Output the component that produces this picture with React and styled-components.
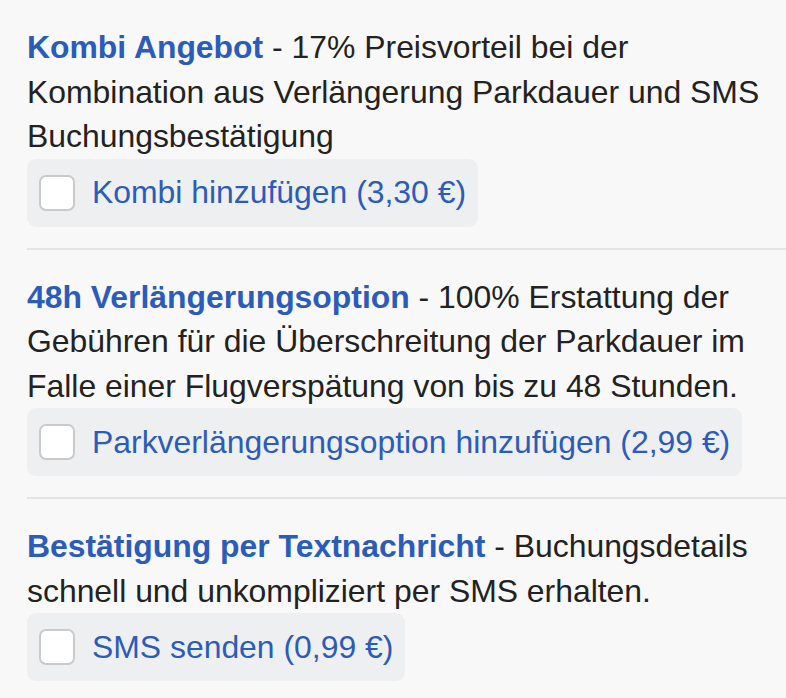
import React from "react";
import styled, { createGlobalStyle } from "styled-components";

const GlobalStyle = createGlobalStyle`
  html, body {
    margin: 0;
    padding: 0;
    background: #f8f8f8;
  }
  body {
    font-family: "Liberation Sans", Arial, Helvetica, sans-serif;
  }
`;

const List = styled.div`
  padding: 25px 0 0 27px;
  width: 786px;
  box-sizing: border-box;
`;

const Option = styled.section`
  padding-bottom: 21px;
  & + & {
    border-top: 2px solid #e4e4e6;
    padding-top: 25px;
  }
`;

const Description = styled.p`
  margin: 0;
  font-size: 31.9px;
  line-height: 44.5px;
  color: #222222;
`;

const Title = styled.strong`
  font-weight: 700;
  color: #2b5cba;
`;

const Choice = styled.label`
  display: inline-flex;
  align-items: center;
  gap: 17px;
  height: 68px;
  padding: 0 12px;
  box-sizing: border-box;
  border-radius: 9px;
  background: #eeeff1;
  cursor: pointer;
`;

const Box = styled.input.attrs({ type: "checkbox" })`
  appearance: none;
  margin: 0;
  width: 36px;
  height: 36px;
  box-sizing: border-box;
  border: 2px solid #cacaca;
  border-radius: 7px;
  background: #ffffff;
  flex: none;
`;

const ChoiceText = styled.span`
  font-size: 31.9px;
  color: #2b5cba;
  white-space: nowrap;
`;

const options = [
  {
    title: "Kombi Angebot",
    text: "17% Preisvorteil bei der Kombination aus Verlängerung Parkdauer und SMS Buchungsbestätigung",
    action: "Kombi hinzufügen (3,30 €)",
  },
  {
    title: "48h Verlängerungsoption",
    text: "100% Erstattung der Gebühren für die Überschreitung der Parkdauer im Falle einer Flugverspätung von bis zu 48 Stunden.",
    action: "Parkverlängerungsoption hinzufügen (2,99 €)",
  },
  {
    title: "Bestätigung per Textnachricht",
    text: "Buchungsdetails schnell und unkompliziert per SMS erhalten.",
    action: "SMS senden (0,99 €)",
  },
];

export default function App() {
  return (
    <>
      <GlobalStyle />
      <List>
        {options.map((o) => (
          <Option key={o.title}>
            <Description>
              <Title>{o.title}</Title> - {o.text}
            </Description>
            <Choice>
              <Box />
              <ChoiceText>{o.action}</ChoiceText>
            </Choice>
          </Option>
        ))}
      </List>
    </>
  );
}
